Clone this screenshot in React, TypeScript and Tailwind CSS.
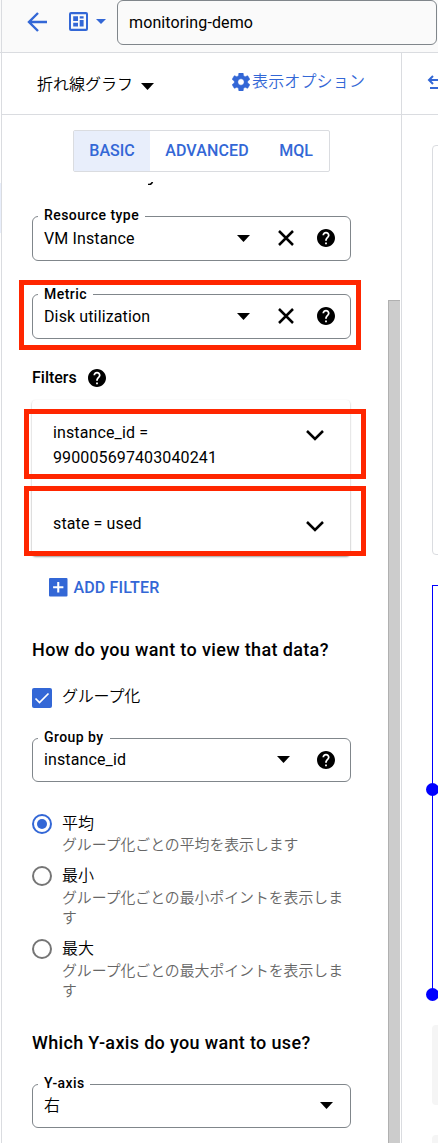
import React from 'react';

const HELP =
  'M12 2C6.48 2 2 6.48 2 12s4.48 10 10 10 10-4.48 10-10S17.52 2 12 2zm1 17h-2v-2h2v2zm2.07-7.75l-.9.92C13.45 12.9 13 13.5 13 15h-2v-.5c0-1.1.45-2.1 1.17-2.83l1.24-1.26c.37-.36.59-.86.59-1.41 0-1.1-.9-2-2-2s-2 .9-2 2H8c0-2.21 1.79-4 4-4s4 1.79 4 4c0 .88-.36 1.68-.93 2.25z';

function HelpIcon({ className = '' }: { className?: string }) {
  return (
    <svg viewBox="2 2 20 20" className={`size-[18px] shrink-0 ${className}`} fill="currentColor">
      <path d={HELP} />
    </svg>
  );
}

function Caret({ className = 'w-[13px] h-[7px]' }: { className?: string }) {
  return (
    <svg viewBox="0 0 12 6" preserveAspectRatio="none" className={`shrink-0 ${className}`} fill="currentColor">
      <path d="M0 0h12L6 6z" />
    </svg>
  );
}

function ClearIcon() {
  return (
    <svg viewBox="0 0 16 16" className="size-4 shrink-0" stroke="currentColor" strokeWidth="2.5" fill="none">
      <path d="M1 1l14 14M15 1L1 15" />
    </svg>
  );
}

function Field({
  label,
  value,
  clear,
  help,
  className,
  labelClass,
  rowClass,
}: {
  label: string;
  value: string;
  clear?: boolean;
  help?: boolean;
  className: string;
  labelClass: string;
  rowClass: string;
}) {
  return (
    <fieldset className={`w-[319px] rounded-[6px] border border-[#80868b] px-[5px] ${className}`}>
      <legend className={`h-[18px] px-[6px] text-sm font-medium tracking-[0.45px] whitespace-nowrap ${labelClass}`}>
        {label}
      </legend>
      <div className={`-mt-[9px] flex items-center pr-[10px] pl-[6px] ${rowClass}`}>
        <span className={`flex-1 text-base tracking-[0.12px] ${clear ? 'pt-[2px]' : ''}`}>{value}</span>
        <Caret className={`h-[7px] w-[13px] ${help ? '' : 'mr-[2px]'}`} />
        {clear && (
          <span className="ml-[28px]">
            <ClearIcon />
          </span>
        )}
        {help && <HelpIcon className={clear ? 'ml-[23px]' : 'ml-[27px]'} />}
      </div>
    </fieldset>
  );
}

function Chevron() {
  return (
    <svg viewBox="0 0 18 11" className="h-[11px] w-[18px]" fill="none" stroke="currentColor" strokeWidth="2.5">
      <path d="M1 1l8 8 8-8" />
    </svg>
  );
}

function Radio({ checked, title, text, className }: { checked?: boolean; title: string; text: string; className: string }) {
  return (
    <div className={`flex font-[350] ${className}`}>
      <span
        className={`flex size-5 shrink-0 items-center justify-center rounded-full border-2 ${
          checked ? 'border-[#3367d6]' : 'border-[#757575]'
        }`}
      >
        {checked && <span className="size-[10px] rounded-full bg-[#3367d6]" />}
      </span>
      <div className="ml-[10px] w-[290px]">
        <div className="text-base leading-[19px]">{title}</div>
        <div className={`text-[14.85px] leading-5 text-[#666666] ${checked ? 'mt-[2px]' : 'mt-[3px]'}`}>{text}</div>
      </div>
    </div>
  );
}

export default function App() {
  return (
    <div className="flex h-[1143px] w-[438px] flex-col overflow-hidden bg-white font-['Roboto','Noto_Sans_CJK_JP',sans-serif] text-black">
      <header className="flex h-[53px] shrink-0 items-start border-b border-[#dadce0] bg-[#fafafa]">
        <div className="h-[52px] w-[2px] shrink-0 border-r border-[#dadce0]" />
        <svg viewBox="0 0 20 20" className="mt-3 ml-[25px] size-5 shrink-0 text-[#3367d6]" fill="none" stroke="currentColor" strokeWidth="2.4">
          <path d="M20 10H2M11 1l-9 9 9 9" />
        </svg>
        <svg viewBox="0 0 19 19" className="mt-3 ml-[22px] h-[19px] w-[19px] shrink-0 text-[#3367d6]" fill="currentColor">
          <path fillRule="evenodd" d="M2 0h15a2 2 0 012 2v15a2 2 0 01-2 2H2a2 2 0 01-2-2V2a2 2 0 012-2zm0 2.3v14.4h15V2.3z" />
          <path d="M4.2 4.2h4.8v4.8h-4.8zM10.7 4.2h3.9v2.2h-3.9zM10.7 8h3.9v6.5h-3.9zM4.2 10.8h4.8v3.7h-4.8z" />
        </svg>
        <Caret className="mt-[19px] ml-[8px] h-[5px] w-[10px] text-[#3367d6]" />
        <div className="ml-[11px] flex h-[45px] w-[320px] shrink-0 items-center rounded-[6px] border border-[#80868b] px-[11px] text-base tracking-[0.12px]">
          monitoring-demo
        </div>
      </header>

      <div className="flex min-h-0 flex-1">
        <div className="w-[2px] shrink-0 border-r border-[#dadce0] pt-[130px]">
          <div className="h-[50px] bg-[#e8eefb]" />
        </div>

        <section className="flex w-[400px] shrink-0 flex-col border-r border-[#dadce0]">
          <div className="flex h-[62px] shrink-0 items-start border-b border-[#dadce0] pl-[35px] font-[350]">
            <div className="mt-5 flex items-center text-base leading-6">
              折れ線グラフ
              <Caret className="mt-[3px] ml-2 h-[7px] w-[13px]" />
            </div>
            <div className="mt-[17px] ml-[78px] flex items-center text-base leading-6 text-[#3367d6]">
              <svg viewBox="2 2 20 20" className="mr-[2px] size-[18px]" fill="currentColor">
                <path stroke="currentColor" strokeWidth="0.5" d="M19.43 12.98c.04-.32.07-.64.07-.98s-.03-.66-.07-.98l2.11-1.65c.19-.15.24-.42.12-.64l-2-3.46c-.12-.22-.39-.3-.61-.22l-2.49 1c-.52-.4-1.08-.73-1.69-.98l-.38-2.65C14.46 2.18 14.25 2 14 2h-4c-.25 0-.46.18-.49.42l-.38 2.65c-.61.25-1.17.59-1.69.98l-2.49-1c-.23-.09-.49 0-.61.22l-2 3.46c-.13.22-.07.49.12.64l2.11 1.65c-.04.32-.07.65-.07.98s.03.66.07.98l-2.11 1.65c-.19.15-.24.42-.12.64l2 3.46c.12.22.39.3.61.22l2.49-1c.52.4 1.08.73 1.69.98l.38 2.65c.03.24.24.42.49.42h4c.25 0 .46-.18.49-.42l.38-2.65c.61-.25 1.17-.59 1.69-.98l2.49 1c.23.09.49 0 .61-.22l2-3.46c.12-.22.07-.49-.12-.64l-2.11-1.65zM12 15.5c-1.93 0-3.5-1.57-3.5-3.5s1.57-3.5 3.5-3.5 3.5 1.57 3.5 3.5-1.57 3.5-3.5 3.5z" />
              </svg>
              <span className="tracking-[0.15px]">表示オプション</span>
            </div>
          </div>

          <div className="mt-[15px] ml-[71px] flex h-[42px] w-[257px] shrink-0 rounded-[2px] border border-[#dadce0] text-base font-medium text-[#3367d6]">
            <span className="flex w-[76px] items-center justify-center bg-[#e8eefb]">BASIC</span>
            <span className="flex w-[114px] items-center justify-center tracking-[0.15px]">ADVANCED</span>
            <span className="flex flex-1 items-center justify-center pr-px">MQL</span>
          </div>

          <div className="flex min-h-0 flex-1 justify-between">
            <div className="relative ml-[17px] w-[347px] pl-[13px]">
              <svg viewBox="0 0 6 3" className="mt-[10px] ml-[116px] h-[3px] w-[6px]">
                <path d="M0 2.2C2 3 3.5 2 4.5 0" fill="none" stroke="currentColor" strokeWidth="1.6" />
              </svg>
              <Field
                label="Resource type"
                value="VM Instance"
                clear
                help
                className="mt-[22px] h-[54px]"
                labelClass="w-[107px] leading-[16px]"
                rowClass="h-[44px]"
              />
              <Field
                label="Metric"
                value="Disk utilization"
                clear
                help
                className="mt-[24px] h-[54px]"
                labelClass="w-[55px] leading-[18px]"
                rowClass="h-[44px]"
              />

              <div className="mt-[27px] flex h-6 items-center text-base font-medium">
                Filters
                <HelpIcon className="ml-[11px]" />
              </div>

              <div className="mt-[10px] h-[156px] w-[318px] rounded-[4px] shadow-[0_1px_2px_rgba(0,0,0,0.35)]">
                <div className="flex h-[87px] items-start justify-between pt-5 pr-[26px] pl-[21px] text-base leading-[25px] tracking-[0.12px]">
                  <span>
                    instance_id =<br />
                    990005697403040241
                  </span>
                  <span className="mt-[10px]">
                    <Chevron />
                  </span>
                </div>
                <div className="flex h-[69px] items-center justify-between rounded-[4px] pt-[5px] pr-[26px] pl-[21px] text-base tracking-[0.12px] shadow-[0_0_2px_rgba(0,0,0,0.15)]">
                  <span>state = used</span>
                  <span className="pt-[4px]">
                    <Chevron />
                  </span>
                </div>
              </div>

              <div className="mt-[20px] ml-[17px] flex h-6 items-center text-base font-medium tracking-[0.15px] text-[#3367d6]">
                <svg viewBox="0 0 18 18" className="mr-[6px] mb-px size-[18.5px]">
                  <rect width="18" height="18" rx="1" fill="currentColor" />
                  <path d="M9 4v10M4 9h10" stroke="white" strokeWidth="2" />
                </svg>
                ADD FILTER
              </div>

              <h2 className="mt-[36px] text-lg leading-7 font-medium tracking-[0.36px] whitespace-nowrap">
                How do you want to view that data?
              </h2>

              <div className="mt-[22px] flex h-6 items-center text-base font-[350]">
                <svg viewBox="0 0 20 20" className="mr-[10px] size-5">
                  <rect width="20" height="20" rx="2" fill="#3367d6" />
                  <path d="M3.5 10.5l4 4 9-9" fill="none" stroke="white" strokeWidth="1.7" />
                </svg>
                <span className="-mt-[2px] tracking-[-0.2px]">グループ化</span>
              </div>

              <Field
                label="Group by"
                value="instance_id"
                help
                className="mt-[19px] h-[53px]"
                labelClass="w-[72px] leading-[16px]"
                rowClass="h-[43px]"
              />

              <Radio checked title="平均" text="グループ化ごとの平均を表示します" className="mt-[32px] h-[52px]" />
              <Radio title="最小" text="グループ化ごとの最小ポイントを表示します" className="h-[73px]" />
              <Radio title="最大" text="グループ化ごとの最大ポイントを表示します" className="h-[60px]" />

              <h2 className="mt-[30px] text-lg leading-7 font-medium tracking-[0.34px] whitespace-nowrap">
                Which Y-axis do you want to use?
              </h2>

              <Field
                label="Y-axis"
                value="右"
                className="mt-[18px] h-[53px] font-[350]"
                labelClass="w-[52px] leading-[16px]"
                rowClass="h-[43px]"
              />

              <div className="absolute top-[108px] left-0 h-[70px] w-[342px] border-[5px] border-[#ff2600]" />
              <div className="absolute top-[237px] left-[5px] h-[70px] w-[342px] border-[5px] border-[#ff2600]" />
              <div className="absolute top-[314px] left-[5px] h-[70px] w-[342px] border-[5px] border-[#ff2600]" />
            </div>
            <div className="mt-[128px] mr-[1px] w-[12px] border-t border-l border-[#b0b0b0] bg-[#cccccc]" />
          </div>
        </section>

        <main className="flex min-w-0 flex-1 flex-col">
          <div className="h-[62px] shrink-0 overflow-hidden border-b border-[#dadce0] pt-[22px] pl-[25px]">
            <svg viewBox="0 0 18 16" className="h-4 w-[18px] text-[#3367d6]" fill="none" stroke="currentColor" strokeWidth="2">
              <path d="M6 1L2 5l4 4M2 5h14v8H3" />
            </svg>
          </div>
          <div className="mt-[30px] ml-[30px] h-[410px] w-[60px] shrink-0 rounded-[4px] border border-[#dadce0]" />
          <div className="relative mt-[30px] ml-[30px] h-[410px] w-[60px] shrink-0 border-t border-l border-[#0000ff]">
            <div className="absolute top-[197px] -left-[7px] size-[13px] rounded-full bg-[#0000ff]" />
            <div className="absolute top-[402px] -left-[7px] size-[13px] rounded-full bg-[#0000ff]" />
          </div>
          <div className="mt-[30px] ml-[30px] h-[80px] w-[60px] shrink-0 rounded-[4px] bg-[#f5f5f5]" />
          <div className="mt-[30px] ml-[30px] h-[80px] w-[60px] shrink-0 rounded-[4px] bg-[#f5f5f5]" />
        </main>
      </div>
    </div>
  );
}
